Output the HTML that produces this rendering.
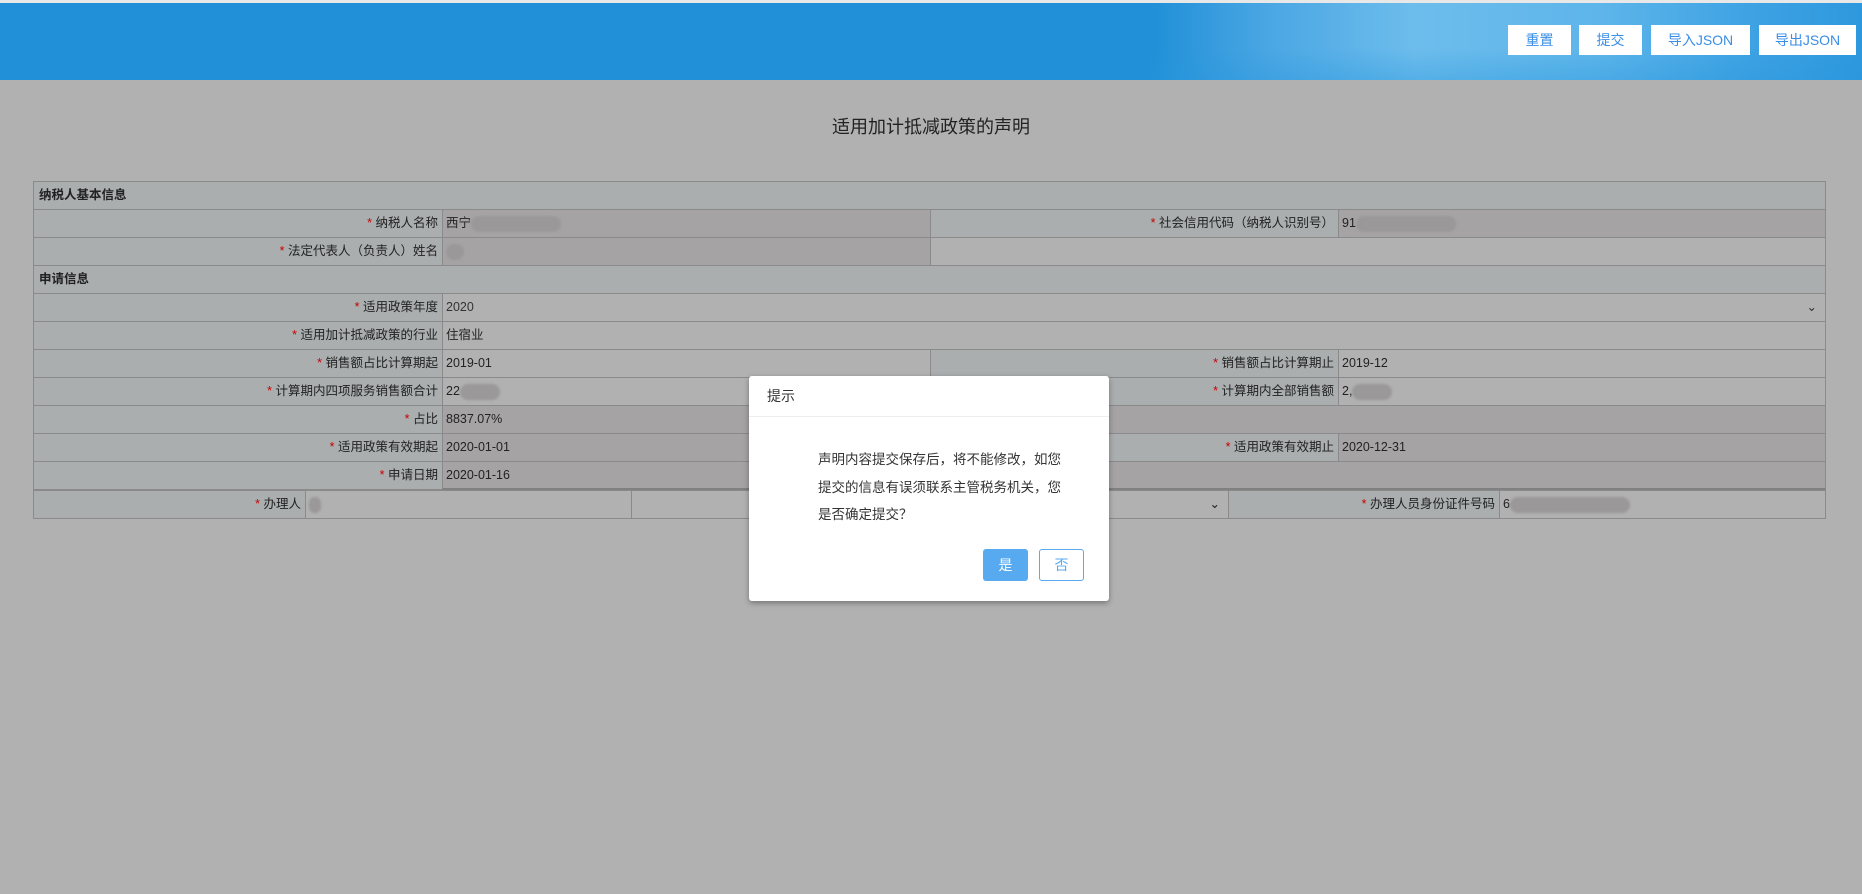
<!DOCTYPE html>
<html><head><meta charset="utf-8">
<style>
*{box-sizing:border-box;margin:0;padding:0}
body{width:1862px;height:894px;background:#b1b1b1;font-family:"Liberation Sans","Noto Sans CJK SC",sans-serif;position:relative;overflow:hidden;color:#222}
.hdr{position:absolute;left:0;top:0;width:1862px;height:80px;border-top:3px solid #e8e8e8;overflow:hidden;
background:linear-gradient(90deg,#2190d8 0%,#2190d8 62%,#4aa6e3 68%,#6dbdec 76%,#5db5ea 86%,#3ea2e3 94%,#2e98de 100%)}
.hdr .mtn{position:absolute;left:1150px;top:45px;width:712px;height:32px;background:linear-gradient(180deg,rgba(40,150,220,0),rgba(40,150,220,.35))}
.btn{position:absolute;top:22px;height:30px;background:#fff;color:#3a8ee6;font-size:14px;text-align:center;line-height:30px}
.title{position:absolute;left:0;width:1862px;top:113px;text-align:center;font-size:18px;color:#222}
.c{position:absolute;border:1px solid #8a8a8a;font-size:12.5px;line-height:26px;white-space:nowrap;overflow:hidden}
.l{background:#aaaeaf;text-align:right;padding-right:4px}
.v{background:#b1b1b1;padding-left:3px}
.d{background:#a6a3a4;padding-left:3px}
.s{background:#aaaeaf;font-weight:bold;padding-left:5px}
.r{color:#c00}
.blur{display:inline-block;vertical-align:middle;height:16px;background:#9a9898;border-radius:8px;filter:blur(1px)}
.dlg{position:absolute;left:749px;top:376px;width:360px;height:225px;background:#fff;border-radius:3px;box-shadow:0 2px 6px rgba(0,0,0,.35)}
.dlg .h{height:41px;border-bottom:1px solid #eee;padding-left:18px;line-height:41px;font-size:14px;color:#333}
.dlg .t{position:absolute;left:69px;top:70px;width:280px;font-size:13.5px;line-height:27.5px;color:#333;white-space:nowrap}
.dlg .b1{position:absolute;left:234px;top:173px;width:45px;height:32px;background:#58aaf0;color:#fff;border-radius:3px;text-align:center;line-height:32px;font-size:14px}
.dlg .b2{position:absolute;left:290px;top:173px;width:45px;height:32px;background:#fff;border:1px solid #58aaf0;color:#58aaf0;border-radius:3px;text-align:center;line-height:30px;font-size:14px}
</style></head><body>
<div class="hdr"><div class="mtn"></div>
<div class="btn" style="left:1508px;width:63px">重置</div>
<div class="btn" style="left:1579px;width:63px">提交</div>
<div class="btn" style="left:1651px;width:99px">导入JSON</div>
<div class="btn" style="left:1759px;width:97px">导出JSON</div>
</div>
<div class="title">适用加计抵减政策的声明</div>

<div class="c s" style="left:33px;top:181px;width:1793px;height:29px">纳税人基本信息</div>
<div class="c l" style="left:33px;top:209px;width:410px;height:29px"><span class="r">* </span>纳税人名称</div>
<div class="c d" style="left:442px;top:209px;width:489px;height:29px">西宁<span class="blur" style="width:90px"></span></div>
<div class="c l" style="left:930px;top:209px;width:409px;height:29px"><span class="r">* </span>社会信用代码（纳税人识别号）</div>
<div class="c d" style="left:1338px;top:209px;width:488px;height:29px">91<span class="blur" style="width:100px"></span></div>
<div class="c l" style="left:33px;top:237px;width:410px;height:29px"><span class="r">* </span>法定代表人（负责人）姓名</div>
<div class="c d" style="left:442px;top:237px;width:489px;height:29px"><span class="blur" style="width:18px"></span></div>
<div class="c v" style="left:930px;top:237px;width:896px;height:29px"></div>
<div class="c s" style="left:33px;top:265px;width:1793px;height:29px">申请信息</div>
<div class="c l" style="left:33px;top:293px;width:410px;height:29px"><span class="r">* </span>适用政策年度</div>
<div class="c v" style="left:442px;top:293px;width:1384px;height:29px;color:#333">2020<span style="position:absolute;right:8px;top:0">&#8964;</span></div>
<div class="c l" style="left:33px;top:321px;width:410px;height:29px"><span class="r">* </span>适用加计抵减政策的行业</div>
<div class="c v" style="left:442px;top:321px;width:1384px;height:29px">住宿业</div>
<div class="c l" style="left:33px;top:349px;width:410px;height:29px"><span class="r">* </span>销售额占比计算期起</div>
<div class="c v" style="left:442px;top:349px;width:489px;height:29px">2019-01</div>
<div class="c l" style="left:930px;top:349px;width:409px;height:29px"><span class="r">* </span>销售额占比计算期止</div>
<div class="c v" style="left:1338px;top:349px;width:488px;height:29px">2019-12</div>
<div class="c l" style="left:33px;top:377px;width:410px;height:29px"><span class="r">* </span>计算期内四项服务销售额合计</div>
<div class="c v" style="left:442px;top:377px;width:489px;height:29px">22<span class="blur" style="width:40px"></span></div>
<div class="c l" style="left:930px;top:377px;width:409px;height:29px"><span class="r">* </span>计算期内全部销售额</div>
<div class="c v" style="left:1338px;top:377px;width:488px;height:29px">2,<span class="blur" style="width:40px"></span></div>
<div class="c l" style="left:33px;top:405px;width:410px;height:29px"><span class="r">* </span>占比</div>
<div class="c d" style="left:442px;top:405px;width:1384px;height:29px">8837.07%</div>
<div class="c l" style="left:33px;top:433px;width:410px;height:29px"><span class="r">* </span>适用政策有效期起</div>
<div class="c d" style="left:442px;top:433px;width:489px;height:29px">2020-01-01</div>
<div class="c l" style="left:930px;top:433px;width:409px;height:29px"><span class="r">* </span>适用政策有效期止</div>
<div class="c d" style="left:1338px;top:433px;width:488px;height:29px">2020-12-31</div>
<div class="c l" style="left:33px;top:461px;width:410px;height:29px"><span class="r">* </span>申请日期</div>
<div class="c d" style="left:442px;top:461px;width:1384px;height:29px;border-bottom:2px solid #808080">2020-01-16</div>
<div class="c l" style="left:33px;top:490px;width:273px;height:29px"><span class="r">* </span>办理人</div>
<div class="c v" style="left:305px;top:490px;width:327px;height:29px"><span class="blur" style="width:12px"></span></div>
<div class="c v" style="left:631px;top:490px;width:598px;height:29px"><span style="position:absolute;right:8px;top:0">&#8964;</span></div>
<div class="c l" style="left:1228px;top:490px;width:272px;height:29px"><span class="r">* </span>办理人员身份证件号码</div>
<div class="c v" style="left:1499px;top:490px;width:327px;height:29px">6<span class="blur" style="width:120px"></span></div>

<div class="dlg">
<div class="h">提示</div>
<div class="t">声明内容提交保存后，将不能修改，如您<br>提交的信息有误须联系主管税务机关，您<br>是否确定提交？</div>
<div class="b1">是</div>
<div class="b2">否</div>
</div>
</body></html>
